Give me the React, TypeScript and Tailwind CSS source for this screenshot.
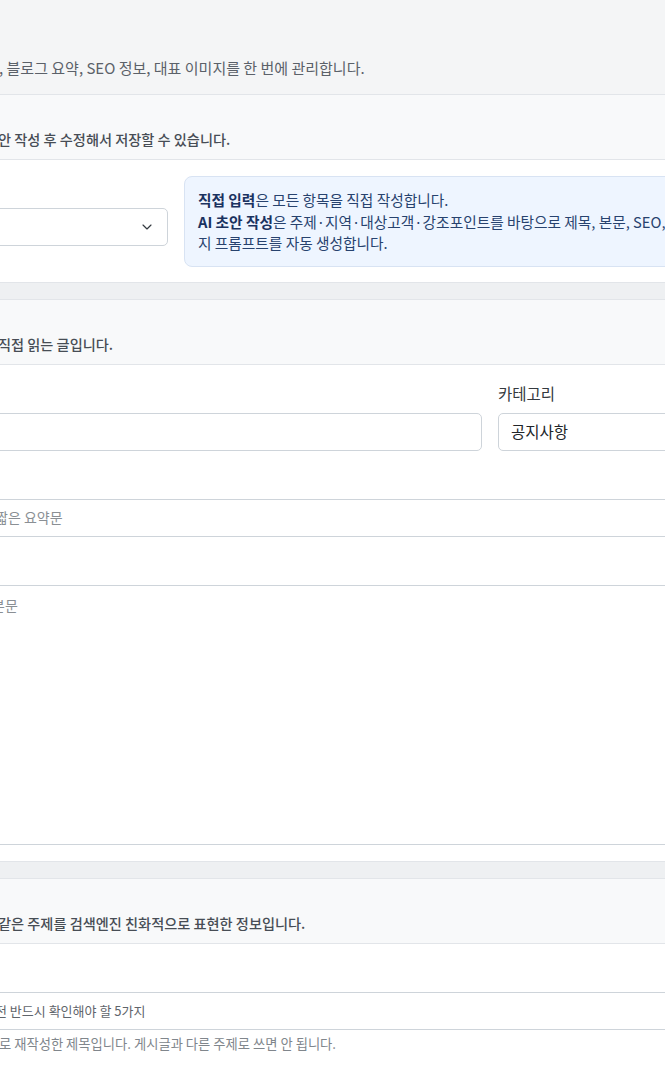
import React from 'react';
import { ChevronDown } from 'lucide-react';

// Subtitle strip at the top of each card (the title sits off to the left)
function CardHeader({ children }: { children: React.ReactNode }) {
  return (
    <div className="bg-[#f8f9fa] border-b border-[#e2e5e9] pt-[35px] pb-[10px] h-[65px]">
      <p className="text-[14.2px] leading-[19px] font-medium text-[#474d55] whitespace-nowrap">{children}</p>
    </div>
  );
}

function FieldLabel({ children }: { children?: React.ReactNode }) {
  return <div className="h-[24px] mb-2 text-[15.5px] leading-[24px] text-[#343a40]">{children}</div>;
}

export default function App() {
  return (
    <div className="w-full min-h-[1090px] overflow-hidden bg-[#eef0f2] font-['Noto_Sans_CJK_KR','Noto_Sans',sans-serif]">
      <div className="w-[900px]">
        {/* Page intro */}
        <div className="h-[94px] bg-[#f4f5f6] pt-[58px]">
          <p className="text-[15px] leading-[20px] text-[#5b6169] whitespace-nowrap">
            <span className="inline-block -ml-[1px]">, 블로그 요약, SEO 정보, 대표 이미지를 한 번에 관리합니다.</span>
          </p>
        </div>

        {/* Card 1: writing mode */}
        <section className="bg-white border-y border-[#e2e5e9]">
          <CardHeader>
            <span className="inline-block -ml-[2px]">안 작성 후 수정해서 저장할 수 있습니다.</span>
          </CardHeader>
          <div className="flex gap-4 pt-4 pb-[15px]">
            <div className="w-[178px] -ml-[10px] pt-[32px] shrink-0">
              <div className="h-[38px] border border-[#ced4da] rounded-[5px] bg-white flex items-center justify-end pr-[12px]">
                <ChevronDown className="w-4 h-4 text-[#343a40]" strokeWidth={1.75} />
              </div>
            </div>
            <div className="flex-1 rounded-lg border border-[#d8e3f3] bg-[#eef5ff] px-[13px] py-[12px] text-[14.7px] leading-[21.5px] text-[#27426e] whitespace-nowrap">
              <p>
                <strong className="font-bold text-[#1a3260]">직접 입력</strong>은 모든 항목을 직접 작성합니다.
              </p>
              <p>
                <strong className="font-bold text-[#1a3260]">AI 초안 작성</strong>은 주제·지역·대상고객·강조포인트를 바탕으로 제목, 본문, SEO, 대표 이미
              </p>
              <p>지 프롬프트를 자동 생성합니다.</p>
            </div>
          </div>
        </section>

        {/* Card 2: post content */}
        <section className="mt-4 bg-white border-y border-[#e2e5e9]">
          <CardHeader>
            <span className="inline-block -ml-[2px]">직접 읽는 글입니다.</span>
          </CardHeader>
          <div className="pt-4 pb-4">
            <div className="flex gap-4">
              <div className="w-[492px] -ml-[10px] shrink-0">
                <FieldLabel />
                <div className="h-[38px] border border-[#ced4da] rounded-[5px] bg-white" />
              </div>
              <div className="w-[300px] shrink-0">
                <FieldLabel>카테고리</FieldLabel>
                <div className="h-[38px] border border-[#ced4da] rounded-[5px] bg-white flex items-center px-[12px] text-[15.5px] text-[#212529]">
                  공지사항
                </div>
              </div>
            </div>

            <div className="mt-4 -ml-[10px]">
              <FieldLabel />
              <div className="h-[38px] border border-[#ced4da] rounded-[5px] bg-white flex items-center text-[14px] text-[#8a8f94] whitespace-nowrap">
                <span className="inline-block ml-[4px]">짧은 요약문</span>
              </div>
            </div>

            <div className="mt-4 -ml-[10px]">
              <FieldLabel />
              <div className="h-[260px] border border-[#ced4da] rounded-[5px] bg-white pt-[9px] text-[14px] leading-[20px] text-[#8a8f94]">
                <span className="inline-block ml-[1px]">본문</span>
              </div>
            </div>
          </div>
        </section>

        {/* Card 3: SEO */}
        <section className="mt-4 bg-white border-y border-[#e2e5e9]">
          <CardHeader>
            <span className="inline-block -ml-[2px]">같은 주제를 검색엔진 친화적으로 표현한 정보입니다.</span>
          </CardHeader>
          <div className="pt-4 pb-[80px]">
            <div className="-ml-[10px]">
              <FieldLabel />
              <div className="h-[38px] border border-[#ced4da] rounded-[5px] bg-white flex items-center text-[13px] text-[#5f656b] whitespace-nowrap">
                <span className="inline-block ml-[4px]">전 반드시 확인해야 할 5가지</span>
              </div>
            </div>
            <p className="mt-[5px] text-[13.3px] leading-[18px] text-[#80868c] whitespace-nowrap">
              <span className="inline-block -ml-[1px]">로 재작성한 제목입니다. 게시글과 다른 주제로 쓰면 안 됩니다.</span>
            </p>
          </div>
        </section>
      </div>
    </div>
  );
}
